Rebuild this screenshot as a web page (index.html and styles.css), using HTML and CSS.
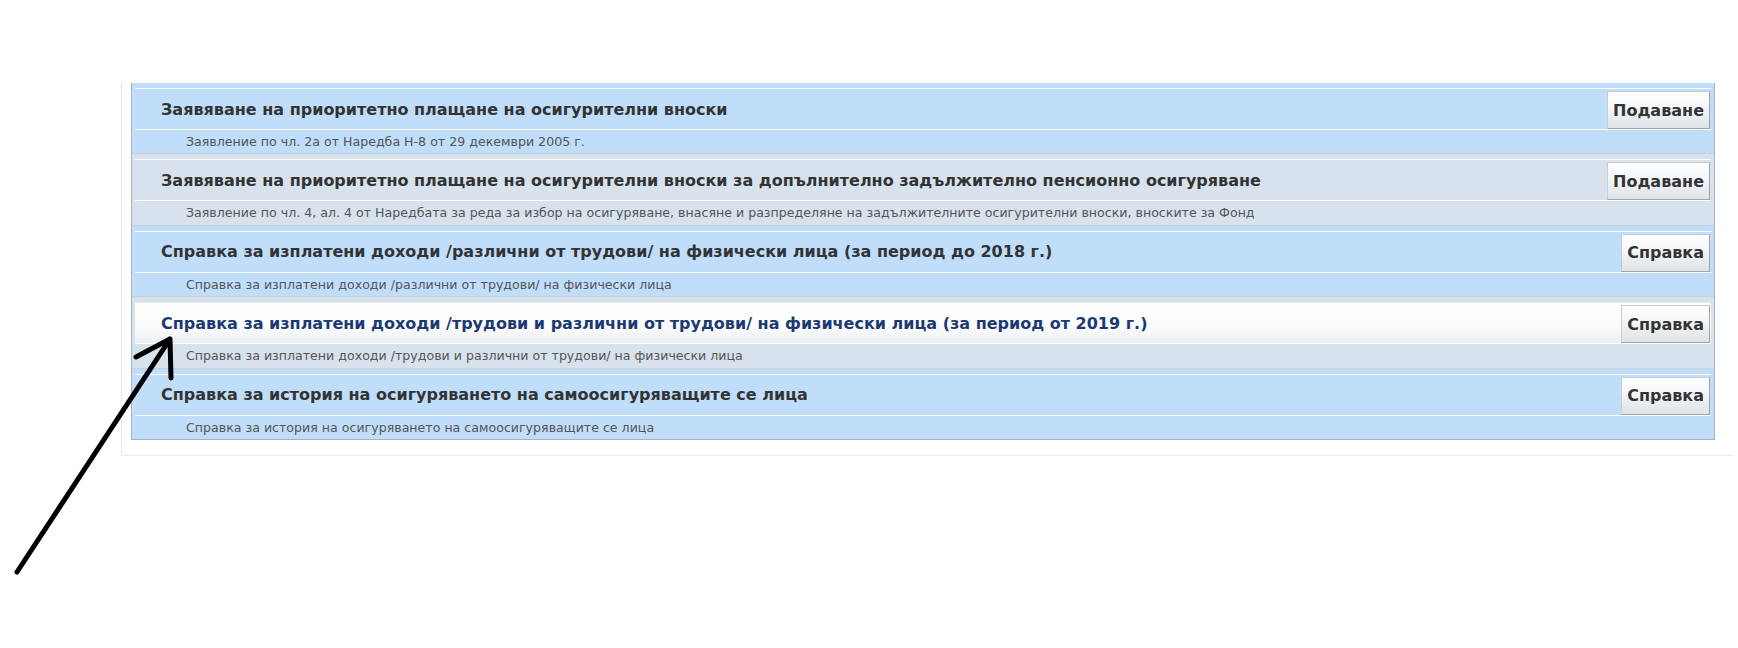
FILE: index.html
```html
<!DOCTYPE html>
<html lang="bg">
<head>
<meta charset="utf-8">
<title>Услуги</title>
<link rel="stylesheet" href="styles.css">
</head>
<body>
<div class="page">
  <div class="frame">
    <div class="panel">
      <div class="row blue">
        <div class="head"><span class="title">Заявяване на приоритетно плащане на осигурителни вноски</span><button class="btn">Подаване</button></div>
        <div class="sub">Заявление по чл. 2а от Наредба Н-8 от 29 декември 2005 г.</div>
      </div>
      <div class="row gray">
        <div class="head"><span class="title">Заявяване на приоритетно плащане на осигурителни вноски за допълнително задължително пенсионно осигуряване</span><button class="btn">Подаване</button></div>
        <div class="sub">Заявление по чл. 4, ал. 4 от Наредбата за реда за избор на осигуряване, внасяне и разпределяне на задължителните осигурителни вноски, вноските за Фонд</div>
      </div>
      <div class="row blue">
        <div class="head"><span class="title">Справка за изплатени доходи /различни от трудови/ на физически лица (за период до 2018 г.)</span><button class="btn">Справка</button></div>
        <div class="sub">Справка за изплатени доходи /различни от трудови/ на физически лица</div>
      </div>
      <div class="row gray hover">
        <div class="head"><span class="title">Справка за изплатени доходи /трудови и различни от трудови/ на физически лица (за период от 2019 г.)</span><button class="btn">Справка</button></div>
        <div class="sub">Справка за изплатени доходи /трудови и различни от трудови/ на физически лица</div>
      </div>
      <div class="row blue last">
        <div class="head"><span class="title">Справка за история на осигуряването на самоосигуряващите се лица</span><button class="btn">Справка</button></div>
        <div class="sub">Справка за история на осигуряването на самоосигуряващите се лица</div>
      </div>
    </div>
  </div>
  <svg class="arrow" width="1738" height="648" viewBox="0 0 1738 648" aria-hidden="true">
    <path d="M17 572 L170 339 M136 357 L170 339 L171 378" fill="none" stroke="#000" stroke-width="5" stroke-linecap="round" stroke-linejoin="round"/>
  </svg>
</div>
</body>
</html>
```
FILE: styles.css
```css
html, body {
  margin: 0;
  padding: 0;
  background: #ffffff;
}
.page {
  position: relative;
  width: 1738px;
  height: 648px;
  overflow: hidden;
  font-family: "DejaVu Sans", Verdana, sans-serif;
}
.frame {
  margin: 83px 0 0 121px;
  width: 1602px;
  padding: 0 0 15px 9px;
  border-left: 1px solid #e4e6e8;
  border-bottom: 1px solid #e8eaec;
}
.panel {
  width: 1582px;
  border: 1px solid #a9b1ba;
  border-top: none;
}
.row {
  padding: 5px 3px 0 3px;
  border-bottom: 1px solid #c9d0d8;
}
.row.last {
  border-bottom: none;
}
.row.blue {
  background: #c0ddfa;
}
.row.gray {
  background: #d8e2ed;
}
.head {
  display: flex;
  align-items: flex-end;
  justify-content: space-between;
  height: 40px;
  border-top: 1px solid #ffffff;
}
.title {
  align-self: center;
  padding-left: 26px;
  font-size: 16px;
  font-weight: bold;
  color: #333333;
  white-space: nowrap;
}
.btn {
  height: 38px;
  margin: 0 1px 0 0;
  padding: 0 5px;
  font-family: "DejaVu Sans", Verdana, sans-serif;
  font-size: 16px;
  font-weight: bold;
  color: #333333;
  background: linear-gradient(to bottom, #ffffff 0%, #f3f5f7 45%, #dfe3e7 100%);
  border: 1px solid #c9cdd1;
  border-right-color: #9ea3a8;
  border-bottom-color: #9ea3a8;
  border-radius: 0;
}
.sub {
  height: 23.4px;
  line-height: 23px;
  border-top: 1px solid #ffffff;
  padding-left: 51px;
  font-size: 12.6px;
  color: #555555;
  white-space: nowrap;
}
.row.hover .head {
  background: linear-gradient(to bottom, #ffffff 0%, #fbfcfc 55%, #edf0f3 100%);
  border-top-color: #e6eaee;
}
.row.hover .title {
  color: #1b3a73;
}
.arrow {
  position: absolute;
  left: 0;
  top: 0;
  pointer-events: none;
}
```
